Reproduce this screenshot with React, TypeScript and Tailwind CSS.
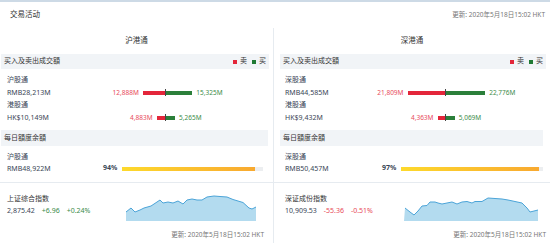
import React from "react";

const font = { fontFamily: '"Noto Sans", "Noto Sans CJK SC", sans-serif' };
const PX_PER_M = 0.00172;

type Trade = { name: string; total: string; sell: number; buy: number };

const markets = [
  {
    title: "沪港通",
    pad: "pl-[7px]",
    bandPad: "pl-[1px] pr-[4px]",
    quotaBandPad: "pl-[1px] pr-[5px]",
    textW: "w-[88px]",
    trades: [
      { name: "沪股通", total: "RMB28,213M", sell: 12888, buy: 15325 },
      { name: "港股通", total: "HK$10,149M", sell: 4883, buy: 5265 },
    ] as Trade[],
    quota: { name: "沪股通", total: "RMB48,922M", pct: 94 },
    quotaW: "w-[96px]",
    trackW: "w-[141px]",
  },
  {
    title: "深港通",
    pad: "pl-[11px]",
    bandPad: "pl-[6px] pr-[4px]",
    quotaBandPad: "pl-[6px] pr-[7px]",
    textW: "w-[90px]",
    trades: [
      { name: "深股通", total: "RMB44,585M", sell: 21809, buy: 22776 },
      { name: "港股通", total: "HK$9,432M", sell: 4363, buy: 5069 },
    ] as Trade[],
    quota: { name: "深股通", total: "RMB50,457M", pct: 97 },
    quotaW: "w-[97px]",
    trackW: "w-[142px]",
  },
];

const indices = [
  {
    name: "上证综合指数",
    value: "2,875.42",
    chg: "+6.96",
    pct: "+0.24%",
    up: true,
    pad: "pl-[7px] pr-[9px]",
    w: 130,
    pts: "0,18 5,14 9,18 14,16 18,14 25,12 31,8 34,6 37,9 42,8 47,9 52,7 57,10 61,6 66,5 71,6 76,6 81,3 88,2 94,2.5 101,3 107,5.5 112,7 117,8.5 123,14 126,15 130,13",
  },
  {
    name: "深证成份指数",
    value: "10,909.53",
    chg: "-55.36",
    pct: "-0.51%",
    up: false,
    pad: "pl-[11px] pr-[4px]",
    w: 134,
    pts: "1,14 6,18 10,21 14,17 18,12 23,11.5 26,8 31,8 34,9 38,10 43,9 48,8 53,10 58,8 63,7.5 68,9 71,7.5 78,7.5 84,4 91,4.5 98,5 104,6 111,7.5 118,9 123,14 126,18 130,17 134,16",
  },
];

function Band({ label, legend }: { label: string; legend?: boolean }) {
  return (
    <div className="flex h-[15px] items-center justify-between bg-[#f1f4f7] px-[3px] text-[7px] text-[#333]">
      <span>{label}</span>
      {legend && (
        <span className="flex items-center gap-[3px]">
          <span className="size-[4px] bg-[#e3263a]" />
          <span className="mr-[2px]">卖</span>
          <span className="size-[4px] bg-[#1f7a34]" />
          <span>买</span>
        </span>
      )}
    </div>
  );
}

function TradeRow({ t, textW }: { t: Trade; textW: string }) {
  return (
    <div className="flex items-end">
      <div className={`${textW} shrink-0 text-[7px] text-[#3a4656]`}>
        <div className="leading-[12px]">{t.name}</div>
        <div className="leading-[13px]">{t.total}</div>
      </div>
      <div className="flex h-[13px] items-center">
        <div className="flex w-[70px] items-center justify-end gap-[4px]">
          <span className="text-[6.5px] text-[#e84a5a]">{t.sell.toLocaleString("en-US")}M</span>
          <span className="h-[4px] bg-[#e3263a]" style={{ width: t.sell * PX_PER_M }} />
        </div>
        <span className="h-[7px] w-px bg-[#444]" />
        <div className="flex items-center gap-[4px]">
          <span className="h-[4px] bg-[#2b7f3a]" style={{ width: t.buy * PX_PER_M }} />
          <span className="text-[6.5px] text-[#3c8c4a]">{t.buy.toLocaleString("en-US")}M</span>
        </div>
      </div>
    </div>
  );
}

function Chart({ w, pts }: { w: number; pts: string }) {
  const area = `0,27 ${pts} ${w},27`;
  return (
    <svg width={w} height={27} viewBox={`0 0 ${w} 27`} className="mt-[1px] shrink-0">
      <polygon points={area} fill="#b3dbef" />
      <polyline points={pts} fill="none" stroke="#4ba4d8" strokeWidth="1" />
    </svg>
  );
}

export default function App() {
  return (
    <div className="h-[244px] w-[550px] overflow-hidden border-t-2 border-[#cddae6] bg-white" style={font}>
      <div className="flex h-[26px] items-center justify-between pl-[10px] pr-[5px]">
        <span className="text-[7.5px] text-[#333]">交易活动</span>
        <span className="text-[6.5px] text-[#777]">更新: 2020年5月18日15:02 HKT</span>
      </div>

      <div className="flex h-[155px] border-b border-[#e6ebf0]">
        {markets.map((m, i) => (
          <div key={m.title} className={`flex flex-col ${i === 0 ? "w-[274px] border-r border-[#e6ebf0]" : "flex-1"}`}>
            <div className="flex h-[26px] items-center justify-center text-[7.5px] text-[#333]">{m.title}</div>
            <div className={m.bandPad}>
              <Band label="买入及卖出成交額" legend />
            </div>
            <div className={`${m.pad} pt-[5px]`}>
              {m.trades.map((t) => (
                <TradeRow key={t.name} t={t} textW={m.textW} />
              ))}
            </div>
            <div className={`${m.quotaBandPad} mt-[6px]`}>
              <div className="flex h-[16px] items-center bg-[#f1f4f7] px-[3px] text-[7px] text-[#333]">每日額度余額</div>
            </div>
            <div className={`${m.pad} flex items-end pt-[5px]`}>
              <div className={`${m.quotaW} shrink-0 text-[7px] text-[#3a4656]`}>
                <div className="leading-[12px]">{m.quota.name}</div>
                <div className="leading-[11px]">{m.quota.total}</div>
              </div>
              <div className="flex h-[11px] items-center">
                <span className="w-[16px] text-[7px] font-bold text-[#3a4656]">{m.quota.pct}%</span>
                <div className={`${m.trackW} ml-[3px] h-[4px] bg-[#eceef0]`}>
                  <div
                    className="h-full bg-gradient-to-r from-[#fdd92c] to-[#f8a930]"
                    style={{ width: `${m.quota.pct}%` }}
                  />
                </div>
              </div>
            </div>
          </div>
        ))}
      </div>

      <div className="flex h-[60px]">
        {indices.map((x, i) => (
          <div key={x.name} className={`flex flex-col ${x.pad} pt-[10px] ${i === 0 ? "w-[274px] border-r border-[#e6ebf0]" : "flex-1"}`}>
            <div className="flex">
              <div className="w-[119px] shrink-0 text-[7px]">
                <div className="leading-[12px] text-[#333]">{x.name}</div>
                <div className="flex gap-[7px] leading-[12px]">
                  <span className="text-[#3a4656]">{x.value}</span>
                  <span className={x.up ? "text-[#3c8c4a]" : "text-[#e84a5a]"}>{x.chg}</span>
                  <span className={x.up ? "text-[#3c8c4a]" : "text-[#e84a5a]"}>{x.pct}</span>
                </div>
              </div>
              <Chart w={x.w} pts={x.pts} />
            </div>
            <div className="mt-[9px] text-right text-[6.5px] leading-[10px] text-[#777]">更新: 2020年5月18日15:02 HKT</div>
          </div>
        ))}
      </div>
    </div>
  );
}
